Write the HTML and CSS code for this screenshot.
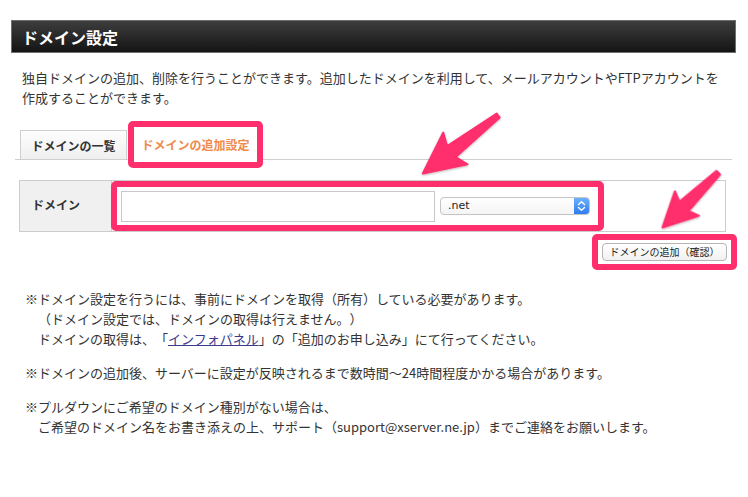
FILE: index.html
```html
<!DOCTYPE html>
<html lang="ja">
<head>
<meta charset="utf-8">
<title>ドメイン設定</title>
<link rel="stylesheet" href="styles.css">
</head>
<body>
<div class="page">
  <div class="header"><h1 class="header-title">ドメイン設定</h1></div>
  <p class="desc">独自ドメインの追加、削除を行うことができます。追加したドメインを利用して、メールアカウントやFTPアカウントを<br>作成することができます。</p>

  <div class="tabs">
    <div class="tab">ドメインの一覧</div>
    <div class="tab tab-active">ドメインの追加設定</div>
  </div>

  <div class="form-table">
    <div class="form-label">ドメイン</div>
    <div class="form-value">
      <div class="highlight field-group">
        <input class="domain-input" type="text">
        <div class="select">
          <span class="select-value">.net</span>
          <span class="select-arrow">
            <svg width="9" height="12" viewBox="0 0 9 12"><path d="M1.5 4.5 L4.5 1.8 L7.5 4.5 M1.5 7.5 L4.5 10.2 L7.5 7.5" fill="none" stroke="#fff" stroke-width="1.4" stroke-linecap="round" stroke-linejoin="round"/></svg>
          </span>
        </div>
      </div>
    </div>
  </div>

  <div class="btn-row">
    <div class="highlight btn-wrap"><button class="confirm-btn" type="button">ドメインの追加（確認）</button></div>
  </div>

  <div class="notes">
    <div class="note">
      <div class="line">※ドメイン設定を行うには、事前にドメインを取得（所有）している必要があります。</div>
      <div class="line indent">（ドメイン設定では、ドメインの取得は行えません。）</div>
      <div class="line indent">ドメインの取得は、「<a class="link" href="#">インフォパネル</a>」の「追加のお申し込み」にて行ってください。</div>
    </div>
    <div class="note">
      <div class="line">※ドメインの追加後、サーバーに設定が反映されるまで数時間〜24時間程度かかる場合があります。</div>
    </div>
    <div class="note">
      <div class="line">※プルダウンにご希望のドメイン種別がない場合は、</div>
      <div class="line indent">ご希望のドメイン名をお書き添えの上、サポート（support@xserver.ne.jp）までご連絡をお願いします。</div>
    </div>
  </div>
</div>

<svg class="arrows" width="748" height="497" viewBox="0 0 748 497">
  <defs>
    <filter id="sh" x="-20%" y="-20%" width="140%" height="140%">
      <feDropShadow dx="0" dy="1" stdDeviation="1.2" flood-color="#000" flood-opacity="0.3"/>
    </filter>
  </defs>
  <g filter="url(#sh)" fill="#ff2e6c" stroke="#ff2e6c" stroke-width="2" stroke-linejoin="round">
    <polygon transform="translate(499 115) rotate(142.5)" points="1,-2.5 60,-7 55,-20 96,0 55,20 60,7 1,2.5"/>
    <polygon transform="translate(719 172) rotate(135.5)" points="1,-2.5 49,-6.5 45,-17 79,0 45,17 49,6.5 1,2.5"/>
  </g>
</svg>
</body>
</html>
```

FILE: styles.css
```css
* { box-sizing: border-box; }

html, body {
  margin: 0;
  padding: 0;
  background: #fff;
}

body {
  position: relative;
  width: 748px;
  height: 497px;
  overflow: hidden;
  font-family: "Noto Sans CJK JP", "Noto Sans", sans-serif;
  color: #333;
  font-size: 13px;
  text-spacing-trim: space-all;
}

.page {
  padding: 20px 12px 0 11px;
}

.header {
  height: 33px;
  border: 1px solid #6e6e6e;
  background: linear-gradient(#3d3d3d, #141414);
  display: flex;
  align-items: center;
  padding-left: 10px;
}

.header-title {
  margin: 0;
  color: #fff;
  font-size: 16px;
  font-weight: bold;
  line-height: 1;
}

.desc {
  margin: 15px 0 0 11px;
  line-height: 20px;
  font-size: 13px;
}

.tabs {
  margin: 13px 4px 0 4px;
  display: flex;
  align-items: flex-end;
  border-bottom: 1px solid #cfcfcf;
  padding-left: 5px;
}

.tab {
  height: 29px;
  width: 107px;
  border: 1px solid #cfcfcf;
  border-bottom: none;
  background: linear-gradient(#fdfdfd, #efefef);
  font-size: 12px;
  font-weight: bold;
  color: #333;
  display: flex;
  align-items: center;
  justify-content: center;
}

.tab-active {
  width: 135px;
  height: 47px;
  margin-left: 1px;
  margin-bottom: -9px;
  border: 6px solid #ff2e6c;
  border-radius: 5px;
  background: #fff;
  color: #f0894c;
}

.form-table {
  margin: 20px 10px 0 8px;
  height: 52px;
  border: 1px solid #cccccc;
  display: flex;
}

.form-label {
  width: 92px;
  background: #f0f0f0;
  border-right: 1px solid #cccccc;
  font-size: 12px;
  font-weight: bold;
  display: flex;
  align-items: center;
  padding-left: 12px;
  padding-bottom: 3px;
}

.form-value {
  flex: 1;
  display: flex;
}

.highlight {
  border: 6px solid #ff2e6c;
  border-radius: 5px;
}

.field-group {
  width: 493px;
  margin-left: -1px;
  display: flex;
  align-items: center;
  padding-left: 4px;
}

.domain-input {
  width: 314px;
  height: 31px;
  border: 1px solid #c8c8c8;
  margin: 0;
  padding: 0 4px;
  font-size: 13px;
  background: #fff;
}

.select {
  margin-left: 5px;
  width: 150px;
  height: 18px;
  border: 1px solid #c4c4c4;
  border-radius: 4px;
  background: linear-gradient(#ffffff, #f4f4f4);
  display: flex;
  align-items: stretch;
  overflow: hidden;
}

.select-value {
  flex: 1;
  font-family: "DejaVu Sans", "Noto Sans", sans-serif;
  font-size: 11px;
  line-height: 16px;
  padding-left: 7px;
  color: #222;
}

.select-arrow {
  width: 15px;
  background: linear-gradient(#6cb0fa, #2f7df0);
  display: flex;
  align-items: center;
  justify-content: center;
}

.btn-row {
  display: flex;
  justify-content: flex-end;
  margin: 2px -1px 0 0;
}

.btn-wrap {
  width: 145px;
  height: 36px;
  display: flex;
  align-items: center;
  justify-content: center;
}

.confirm-btn {
  width: 125px;
  height: 18px;
  margin: 0;
  padding: 0;
  border: 1px solid #b5b5b5;
  border-radius: 4px;
  background: linear-gradient(#ffffff, #f1f1f1);
  font-family: "Noto Sans CJK JP", sans-serif;
  font-size: 10px;
  line-height: 16px;
  color: #222;
  text-spacing-trim: space-all;
}

.notes {
  margin: 19px 0 0 14px;
}

.note {
  margin-bottom: 14px;
}

.line {
  line-height: 20px;
  white-space: nowrap;
}

.line.indent {
  padding-left: 13px;
}

.link {
  color: #3b3a8c;
  text-decoration: underline;
}

.arrows {
  position: absolute;
  left: 0;
  top: 0;
  pointer-events: none;
}
```
